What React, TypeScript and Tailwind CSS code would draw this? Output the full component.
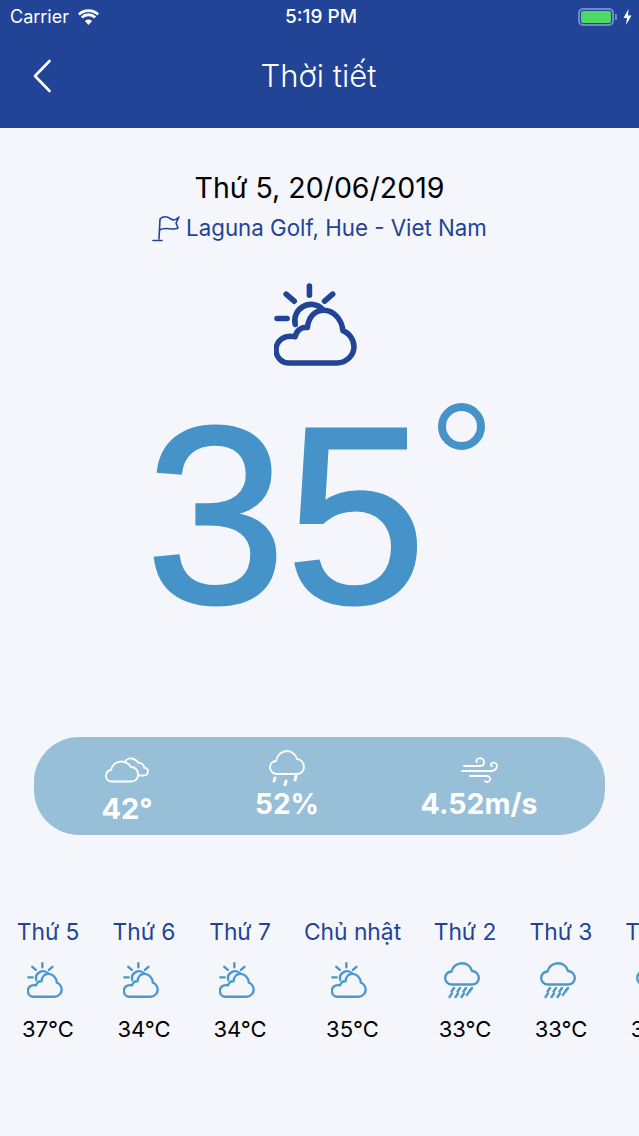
function SunCloudIcon({ className }: { className: string }) {
  return (
    <svg viewBox="0 0 82 82" className={className} fill="none" stroke="currentColor" strokeWidth="5.500" strokeLinecap="round" strokeLinejoin="round">
      <path d="M35 3 V12 M12 11 L20 18 M58 11 L50 18 M3 35 H13" />
      <path d="M21 41 A16 16 0 0 1 48 26" />
      <path d="M15 79 H62 C72 79 79 71 79 63 C79 56 74 49 68 47 C67 35 58 27 49 27 C40 27 34 34 33 44 C27 43 22 47 21 53 C10 51 2 57 2 66 C2 74 8 79 15 79 Z" />
    </svg>
  );
}

function RainIcon({ className }: { className: string }) {
  return (
    <svg viewBox="0 0 36 37" className={className} fill="none" stroke="currentColor" strokeLinecap="round" strokeLinejoin="round">
      <path d="M8 22.500 C4 22.500 1.200 19.500 1.200 16 C1.200 12.500 4 9.500 7.500 9.500 C8.500 4.500 13 1.200 18 1.200 C23 1.200 27 4.500 28 9 C32 9 34.800 12.500 34.800 16 C34.800 19.500 32 22.500 28 22.500 Z" strokeWidth="2.400" />
      <path d="M10 26 L7.500 29.500 M16 26 L13.500 29.500 M22 26 L19.500 29.500 M28 26 L25.500 29.500 M8 31.500 L5.500 35 M14 31.500 L11.500 35 M20 31.500 L17.500 35 M26 28 L23 33" strokeWidth="2.400" />
    </svg>
  );
}

const forecast = [
  { day: 'Thứ 5', temp: '37°C', rain: false, width: 'w-[96px]' },
  { day: 'Thứ 6', temp: '34°C', rain: false, width: 'w-[96px]' },
  { day: 'Thứ 7', temp: '34°C', rain: false, width: 'w-[96px]' },
  { day: 'Chủ nhật', temp: '35°C', rain: false, width: 'w-[129px]' },
  { day: 'Thứ 2', temp: '33°C', rain: true, width: 'w-[96px]' },
  { day: 'Thứ 3', temp: '33°C', rain: true, width: 'w-[96px]' },
  { day: 'Thứ 4', temp: '33°C', rain: true, width: 'w-[96px]' },
];

export default function App() {
  return (
    <div className="h-[1136px] w-[639px] overflow-hidden bg-[#f4f6fb] font-['Inter','Liberation_Sans',sans-serif]">
      {/* Header */}
      <div className="h-[128px] bg-[#224497] text-white">
        <div className="flex h-[33px] items-center justify-between pl-[10px] pr-[7px]">
          <div className="flex w-[200px] items-center gap-[9px]">
            <span className="text-[18px] leading-none">Carrier</span>
            <svg viewBox="0 0 20 15" className="h-[16px] w-[21px]" fill="white">
              <path d="M10 15 L6.600 11.200 A5 5 0 0 1 13.400 11.200 Z" />
              <path d="M4.600 9 L2.700 7 A10.500 10.500 0 0 1 17.300 7 L15.400 9 A7.800 7.800 0 0 0 4.600 9 Z" />
              <path d="M1.700 6 L0 4.100 A14.500 14.500 0 0 1 20 4.100 L18.300 6 A12 12 0 0 0 1.700 6 Z" />
            </svg>
          </div>
          <span className="text-[19px] font-medium leading-none">5:19 PM</span>
          <div className="flex w-[200px] items-center justify-end">
            <div className="flex h-[18px] w-[36px] items-center rounded-[5px] border-2 border-[#6f8cc8] p-[1px]">
              <div className="h-full w-full rounded-[2px] bg-[#4cd964]" />
            </div>
            <div className="ml-[1px] mr-[6px] h-[6px] w-[2px] rounded-r-[1px] bg-[#6f8cc8]" />
            <svg viewBox="0 0 9 16" className="h-[16px] w-[9px]" fill="white">
              <path d="M5.500 0 L0.500 9 H4 L3 16 L8.500 6.500 H5 Z" />
            </svg>
          </div>
        </div>
        <div className="relative flex h-[86px] items-center justify-center pb-[1px] pr-[2px]">
          <svg viewBox="0 0 18 34" className="absolute left-[33px] top-[26px] h-[34px] w-[18px]" fill="none" stroke="white" strokeWidth="2.600" strokeLinecap="round" strokeLinejoin="round">
            <path d="M16.500 2 L2 17 L16.500 32" />
          </svg>
          <span className="text-[31px] font-light leading-none">Thời tiết</span>
        </div>
      </div>

      {/* Date and location */}
      <div className="pt-[43px] text-center">
        <div className="text-[28.500px] leading-[34px] text-black">Thứ 5, 20/06/2019</div>
        <div className="mt-[9px] flex items-center justify-center gap-[6px] text-[#224497]">
          <svg viewBox="0 0 28 28" className="h-[28px] w-[28px]" fill="none" stroke="currentColor" strokeWidth="1.600" strokeLinecap="round" strokeLinejoin="round">
            <path d="M7 25 L8 5 C12 1 16 3 19 5 C21 6.500 24 6 27 3 L24 9 L26 14 C20 17 14 12 7.500 16" />
            <path d="M1 26.500 H10" />
          </svg>
          <span className="text-[22.300px] leading-[28px]">Laguna Golf, Hue - Viet Nam</span>
        </div>
      </div>

      {/* Current weather */}
      <div className="mt-[41px] flex justify-center pr-[8px] text-[#224497]">
        <SunCloudIcon className="h-[83px] w-[83px]" />
      </div>
      <div className="relative h-[359px]">
        <div className="pr-[67px] pt-[15px] text-center font-['Liberation_Sans',sans-serif] text-[252px] leading-[270px] text-[#4693c9] [-webkit-text-stroke:3px_#4693c9]">
          35
        </div>
        <div className="absolute left-[438px] top-[37px] h-[47px] w-[47px] rounded-full border-[8px] border-[#4693c9]" />
      </div>

      {/* Stats */}
      <div className="mx-[34px] mt-[12px] flex h-[98px] items-start rounded-[45px] bg-[#97bfd8] pl-[43px] text-white">
        <div className="flex w-[100px] flex-col items-center pt-[20px]">
          <svg viewBox="0 0 44 26" className="h-[26px] w-[44px]" fill="none" stroke="white" strokeWidth="1.800" strokeLinejoin="round">
            <path d="M7 24.500 C3 24.500 1 22 1 19 C1 16 3 13.500 6 13 C7 8 11 4.500 16 4.500 C21 4.500 24 7 26 10 C30 10 33 13 33 17 C33 22 30 24.500 26 24.500 Z" />
            <path d="M20 5 C21 2.500 24 1 27 1.500 C30 2 32 4 33 5.500 C36 5.500 39 7.500 39 10.500 C41.500 11 43 12.500 43 14.500 C43 17 40.500 19 38 18.500 L33 18.500" />
          </svg>
          <span className="mt-[9px] text-[29px] font-bold leading-[34px]">42°</span>
        </div>
        <div className="ml-[60px] flex w-[100px] flex-col items-center pt-[13px]">
          <svg viewBox="0 0 36 36" className="h-[36px] w-[36px]" fill="none" stroke="white" strokeWidth="1.800" strokeLinejoin="round">
            <path d="M8 24 C4 24 1 21 1 17 C1 14 3.500 11 7 11 C8 5 13 1 18 1 C23 1 27 5 28 9 C32 9 35 13 35 17 C35 21 32 24 28 24 Z" />
            <path d="M6 28 L5 31 M17 31 L16 35 M27 26 L26 30" strokeWidth="3" strokeLinecap="round" />
          </svg>
          <span className="mt-[1px] text-[28px] font-bold leading-[34px]">52%</span>
        </div>
        <div className="ml-[62px] flex w-[160px] flex-col items-center pt-[20px]">
          <svg viewBox="0 0 37 26" className="h-[26px] w-[37px]" fill="none" stroke="white" strokeWidth="1.800" strokeLinecap="round">
            <path d="M1 14 H30 C34 14 36 11 36 9 C36 6 33 5 31 6 C29 7 30 9 31 9" />
            <path d="M3 9 H19 C22 9 23 7 23 5 C23 2 20 0.500 17.500 1.500 C15 2.500 15 4 16 5" />
            <path d="M9 19 H26 C28 19 30 21 29 23 C28 25.500 25 25.500 24 24" />
          </svg>
          <span className="mt-[4px] text-[28.500px] font-bold leading-[34px]">4.52m/s</span>
        </div>
      </div>

      {/* Forecast */}
      <div className="mt-[83px] flex overflow-hidden">
        {forecast.map((item) => (
          <div key={item.day} className={`${item.width} flex shrink-0 flex-col items-center text-center`}>
            <span className="whitespace-nowrap text-[22.800px] leading-[28px] text-[#224497]">{item.day}</span>
            <div className="mr-[7px] mt-[16px] h-[36px] text-[#4e97cb]">
              {item.rain ? <RainIcon className="h-[37px] w-[36px]" /> : <SunCloudIcon className="h-[36px] w-[36px]" />}
            </div>
            <span className="mt-[17px] whitespace-nowrap text-[22px] leading-[28px] text-black">{item.temp}</span>
          </div>
        ))}
      </div>
    </div>
  );
}
